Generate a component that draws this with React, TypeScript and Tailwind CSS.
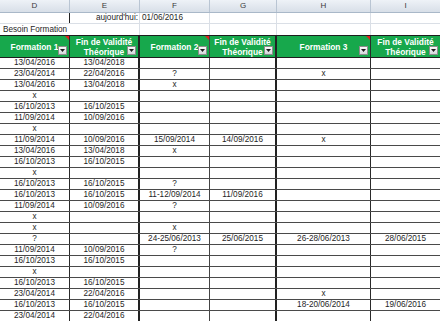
const COLS = ["D", "E", "F", "G", "H", "I"];

// right borders of the bordered table, per column
const RB = [
  "border-r border-r-[#2a2a2a]",
  "border-r-2 border-r-[#222]",
  "border-r border-r-[#444]",
  "border-r-2 border-r-[#222]",
  "border-r border-r-[#2a2a2a]",
  "",
];

const GRID = "grid grid-cols-[70px_70px_70px_67px_94px_69px]";

const HEADERS: { label: string[]; comment?: boolean }[] = [
  { label: ["Formation 1"], comment: true },
  { label: ["Fin de Validité", "Théorique"] },
  { label: ["Formation 2"], comment: true },
  { label: ["Fin de Validité", "Théorique"] },
  { label: ["Formation 3"], comment: true },
  { label: ["Fin de Validité", "Théorique"] },
];

const ROWS: string[][] = [
  ["13/04/2016", "13/04/2018", "", "", "", ""],
  ["23/04/2014", "22/04/2016", "?", "", "x", ""],
  ["13/04/2016", "13/04/2018", "x", "", "", ""],
  ["x", "", "", "", "", ""],
  ["16/10/2013", "16/10/2015", "", "", "", ""],
  ["11/09/2014", "10/09/2016", "", "", "", ""],
  ["x", "", "", "", "", ""],
  ["11/09/2014", "10/09/2016", "15/09/2014", "14/09/2016", "x", ""],
  ["13/04/2016", "13/04/2018", "x", "", "", ""],
  ["16/10/2013", "16/10/2015", "", "", "", ""],
  ["x", "", "", "", "", ""],
  ["16/10/2013", "16/10/2015", "?", "", "", ""],
  ["16/10/2013", "16/10/2015", "11-12/09/2014", "11/09/2016", "", ""],
  ["11/09/2014", "10/09/2016", "?", "", "", ""],
  ["x", "", "", "", "", ""],
  ["x", "", "x", "", "", ""],
  ["?", "", "24-25/06/2013", "25/06/2015", "26-28/06/2013", "28/06/2015"],
  ["11/09/2014", "10/09/2016", "?", "", "", ""],
  ["16/10/2013", "16/10/2015", "", "", "", ""],
  ["x", "", "", "", "", ""],
  ["16/10/2013", "16/10/2015", "", "", "", ""],
  ["23/04/2014", "22/04/2016", "", "", "x", ""],
  ["16/10/2013", "16/10/2015", "", "", "18-20/06/2014", "19/06/2016"],
  ["23/04/2014", "22/04/2016", "", "", "", ""],
];

function FilterButton() {
  return (
    <div className="absolute right-[2px] bottom-[2px] w-[9px] h-[9px] border border-[#8c8c8c] bg-gradient-to-b from-[#fafafa] to-[#d4d7db] flex items-center justify-center">
      <svg width="5" height="3" viewBox="0 0 5 3">
        <path d="M0 0 H5 L2.5 3 Z" fill="#1c1c1c" />
      </svg>
    </div>
  );
}

export default function App() {
  return (
    <div className="w-[440px] h-[321px] overflow-hidden bg-white font-['Liberation_Sans',Arial,sans-serif] text-[8.2px] text-[#1e1e1e]">
      {/* column letters */}
      <div className={`${GRID} h-[13px] bg-gradient-to-b from-[#eef2f7] to-[#d8dfe8] border-b border-b-[#a9b8c8]`}>
        {COLS.map((c, i) => (
          <div
            key={c}
            className={`flex items-center justify-center text-[8px] text-[#3a3a3a] ${i < 5 ? "border-r border-r-[#b9c5d3]" : ""}`}
          >
            {c}
          </div>
        ))}
      </div>

      {/* today row */}
      <div className={`${GRID} h-[11px] border-b border-b-[#dadfe6]`}>
        <div className="border-r border-r-[#222]" />
        <div className="flex items-center justify-end pr-[1px] leading-[10px] border-r border-r-[#dadfe6]">
          aujourd'hui:
        </div>
        <div className="flex items-center pl-[2px] leading-[10px] whitespace-nowrap border-r border-r-[#dadfe6]">
          01/06/2016
        </div>
        <div className="border-r border-r-[#dadfe6]" />
        <div className="border-r border-r-[#dadfe6]" />
        <div />
      </div>

      {/* label row */}
      <div className={`${GRID} h-[11px]`}>
        <div className="flex items-center pl-[3px] leading-[10px] whitespace-nowrap overflow-visible">
          Besoin Formation
        </div>
        <div className="border-r border-r-[#dadfe6]" />
        <div className="border-r border-r-[#dadfe6]" />
        <div className="border-r border-r-[#dadfe6]" />
        <div className="border-r border-r-[#dadfe6]" />
        <div />
      </div>

      {/* green table header */}
      <div className={`${GRID} h-[23px] bg-[#17a84c] border-y border-y-[#1e1e1e]`}>
        {HEADERS.map((h, i) => (
          <div
            key={i}
            className={`relative flex flex-col items-center justify-center font-bold text-white text-[8.4px] leading-[10px] ${RB[i]}`}
          >
            {h.label.map((l) => (
              <span key={l} className="whitespace-nowrap">{l}</span>
            ))}
            {h.comment && (
              <span className="absolute top-0 right-0 w-0 h-0 border-l-[4px] border-l-transparent border-t-[4px] border-t-[#e0201b]" />
            )}
            <FilterButton />
          </div>
        ))}
      </div>

      {/* data rows */}
      {ROWS.map((row, r) => (
        <div key={r} className={`${GRID} h-[11px] border-b border-b-[#4a4a4a]`}>
          {row.map((v, i) => (
            <div
              key={i}
              className={`flex items-center justify-center leading-[10px] whitespace-nowrap ${RB[i]}`}
            >
              {v}
            </div>
          ))}
        </div>
      ))}
    </div>
  );
}
